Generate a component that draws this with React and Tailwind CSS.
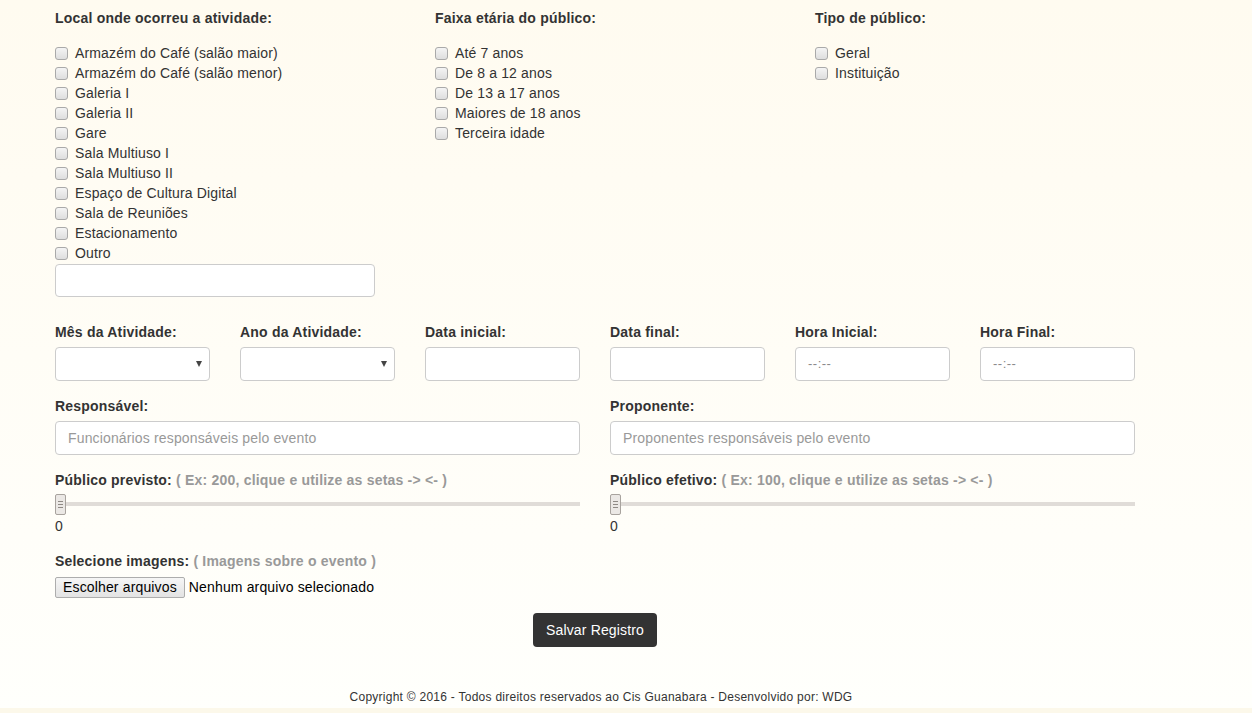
import React from 'react';

const locais = [
  'Armazém do Café (salão maior)',
  'Armazém do Café (salão menor)',
  'Galeria I',
  'Galeria II',
  'Gare',
  'Sala Multiuso I',
  'Sala Multiuso II',
  'Espaço de Cultura Digital',
  'Sala de Reuniões',
  'Estacionamento',
  'Outro',
];

const faixas = ['Até 7 anos', 'De 8 a 12 anos', 'De 13 a 17 anos', 'Maiores de 18 anos', 'Terceira idade'];
const tipos = ['Geral', 'Instituição'];

const Check = ({ label }) => (
  <label className="flex h-[20px] items-center">
    <span className="h-[13px] w-[13px] rounded-[3px] border border-[#a9a9a9] bg-gradient-to-b from-[#f4f4f4] to-[#dedede]" />
    <span className="ml-[7px]">{label}</span>
  </label>
);

const Group = ({ title, items }) => (
  <div>
    <h3 className="font-bold leading-[20px] tracking-[0.2px]">{title}</h3>
    <div className="mt-[15px]">
      {items.map((i) => (
        <Check key={i} label={i} />
      ))}
    </div>
  </div>
);

const Label = ({ children, hint }) => (
  <div className="font-bold leading-[20px] tracking-[0.2px]">
    {children}
    {hint && <span className="text-[#999]"> {hint}</span>}
  </div>
);

const Box = ({ children, className = '' }) => (
  <div
    className={`relative mt-[5px] flex h-[34px] items-center rounded-[4px] border border-[#ccc] bg-white px-[12px] ${className}`}
  >
    {children}
  </div>
);

const Slider = () => (
  <div>
    <div className="relative mt-[4px] h-[21px]">
      <div className="absolute left-0 right-0 top-[8px] h-[4px] bg-[#e0dcd8]" />
      <div className="absolute left-0 top-0 flex h-[21px] w-[11px] flex-col items-center justify-center gap-[2px] rounded-[2px] border border-[#a8a39e] bg-[#ebe8e5]">
        <span className="h-px w-[5px] bg-[#8f8a85]" />
        <span className="h-px w-[5px] bg-[#8f8a85]" />
        <span className="h-px w-[5px] bg-[#8f8a85]" />
      </div>
    </div>
    <div className="mt-[1px] leading-[20px]">0</div>
  </div>
);

export default function App() {
  return (
    <div
      className="flex h-[713px] flex-col overflow-hidden bg-gradient-to-b from-[#fffbf0] to-[#fffffc] text-[14px] tracking-[0.15px] text-[#333]"
      style={{ fontFamily: '"Liberation Sans", Arial, sans-serif' }}
    >
      <div className="w-[1135px] pl-[55px] pt-[8px]">
        <div className="grid grid-cols-[380px_380px_320px]">
          <div>
            <Group title="Local onde ocorreu a atividade:" items={locais} />
            <div className="mt-px h-[33px] w-[320px] rounded-[4px] border border-[#ccc] bg-white" />
          </div>
          <Group title="Faixa etária do público:" items={faixas} />
          <Group title="Tipo de público:" items={tipos} />
        </div>

        <div className="mt-[25px] grid grid-cols-6 gap-x-[30px]">
          {['Mês da Atividade:', 'Ano da Atividade:'].map((l) => (
            <div key={l}>
              <Label>{l}</Label>
              <Box>
                <span className="absolute right-[7px] top-[13px] h-0 w-0 border-x-[3px] border-t-[6px] border-x-transparent border-t-[#444]" />
              </Box>
            </div>
          ))}
          {['Data inicial:', 'Data final:'].map((l) => (
            <div key={l}>
              <Label>{l}</Label>
              <Box />
            </div>
          ))}
          {['Hora Inicial:', 'Hora Final:'].map((l) => (
            <div key={l}>
              <Label>{l}</Label>
              <Box>
                <span className="text-[13px] tracking-[0.5px] text-[#8a8a8a]">--:--</span>
              </Box>
            </div>
          ))}
        </div>

        <div className="mt-[15px] grid grid-cols-2 gap-x-[30px]">
          <div>
            <Label>Responsável:</Label>
            <Box>
              <span className="text-[#999]">Funcionários responsáveis pelo evento</span>
            </Box>
          </div>
          <div>
            <Label>Proponente:</Label>
            <Box>
              <span className="text-[#999]">Proponentes responsáveis pelo evento</span>
            </Box>
          </div>
        </div>

        <div className="mt-[15px] grid grid-cols-2 gap-x-[30px]">
          <div>
            <Label hint="( Ex: 200, clique e utilize as setas -> <- )">Público previsto:</Label>
            <Slider />
          </div>
          <div>
            <Label hint="( Ex: 100, clique e utilize as setas -> <- )">Público efetivo:</Label>
            <Slider />
          </div>
        </div>

        <div className="mt-[15px]">
          <Label hint="( Imagens sobre o evento )">Selecione imagens:</Label>
          <div className="mt-[6px] flex items-center">
            <span className="flex h-[21px] items-center rounded-[2px] border border-[#adadad] bg-gradient-to-b from-[#f6f6f6] to-[#e3e3e3] px-[7px] text-[14px] text-black">
              Escolher arquivos
            </span>
            <span className="ml-[4px] text-black">Nenhum arquivo selecionado</span>
          </div>
        </div>

        <div className="mt-[15px] flex justify-center">
          <button className="h-[34px] rounded-[4px] bg-[#333] px-[13px] text-[14px] text-white">
            Salvar Registro
          </button>
        </div>
      </div>

      <div className="mt-[42px] w-[1147px] pl-[55px] text-center text-[12px] leading-[16px] tracking-[0.26px]">
        Copyright © 2016 - Todos direitos reservados ao Cis Guanabara - Desenvolvido por: WDG
      </div>
      <div className="mt-auto h-[5px] bg-[#fcf8ea]" />
    </div>
  );
}
